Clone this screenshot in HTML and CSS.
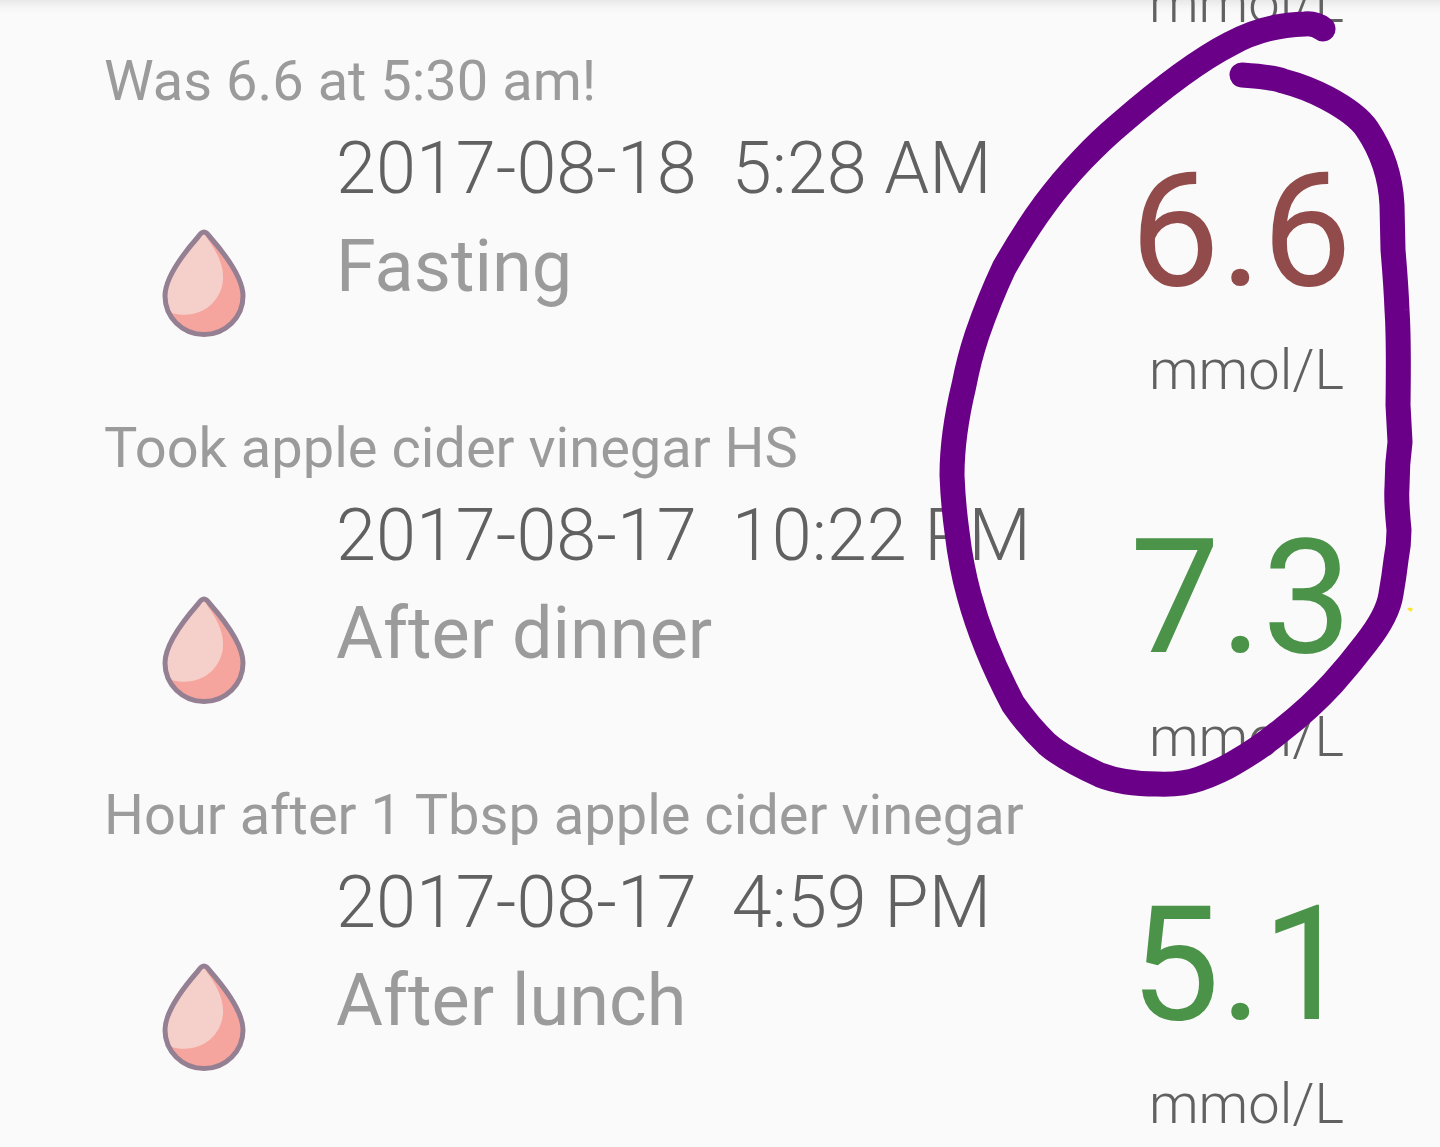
FILE: index.html
```html
<!DOCTYPE html>
<html lang="en">
<head>
  <meta charset="UTF-8" />
  <meta name="viewport" content="width=device-width, initial-scale=1" />
  <title>Glucose Log</title>
  <link rel="stylesheet" href="styles.css">
</head>
<body>
  <!-- shared drop icon -->
  <svg class="symbols" aria-hidden="true">
    <symbol id="drop" viewBox="0 0 84 108">
      <path fill="#f5a59d" d="M42 3C44 3 46 5 48 8C62 24 81 49 81 67A39 38.500 0 0 1 3 67C3 49 22 24 36 8C38 5 40 3 42 3Z"/>
      <path fill="#f5d0cb" d="M42 5C50 16 62 32 61 50C60 72 39 92 9 84C5 77 3 72 3 67C3 49 22 24 36 8Z"/>
      <path fill="none" stroke="#957f92" stroke-width="5" d="M42 3C44 3 46 5 48 8C62 24 81 49 81 67A39 38.500 0 0 1 3 67C3 49 22 24 36 8C38 5 40 3 42 3Z"/>
    </symbol>
  </svg>

  <main class="log">
    <div class="previous">
      <p class="unit">mmol/L</p>
    </div>

    <article class="entry">
      <p class="note">Was 6.6 at 5:30 am!</p>
      <div class="row">
        <svg class="drop" aria-hidden="true"><use href="#drop"/></svg>
        <div class="details">
          <p class="date">2017-08-18  5:28 AM</p>
          <p class="category">Fasting</p>
        </div>
        <div class="reading">
          <p class="value high">6.6</p>
          <p class="unit">mmol/L</p>
        </div>
      </div>
    </article>

    <article class="entry">
      <p class="note">Took apple cider vinegar HS</p>
      <div class="row">
        <svg class="drop" aria-hidden="true"><use href="#drop"/></svg>
        <div class="details">
          <p class="date">2017-08-17  10:22 PM</p>
          <p class="category">After dinner</p>
        </div>
        <div class="reading">
          <p class="value">7.3</p>
          <p class="unit">mmol/L</p>
        </div>
      </div>
    </article>

    <article class="entry">
      <p class="note">Hour after 1 Tbsp apple cider vinegar</p>
      <div class="row">
        <svg class="drop" aria-hidden="true"><use href="#drop"/></svg>
        <div class="details">
          <p class="date">2017-08-17  4:59 PM</p>
          <p class="category">After lunch</p>
        </div>
        <div class="reading">
          <p class="value">5.1</p>
          <p class="unit">mmol/L</p>
        </div>
      </div>
    </article>

    <!-- hand-drawn circle over the readings -->
    <svg class="marker" viewBox="0 0 1440 1147" aria-hidden="true">
      <path class="ink" d="M1323 29Q1315 23 1305 24Q1264 25 1230 44Q1187 66 1120 124Q1101 140 1082 160Q1062 181 1045 204Q1025 231 1004 268Q989 300 977 335Q969 359 964 385Q952 435 952 475Q953 503 957 532Q961 566 969 595Q983 647 1013 704Q1029 727 1047 744Q1063 758 1100 775Q1123 784 1157 784Q1182 785 1199 779Q1221 771 1234 763Q1259 749 1283 729Q1310 708 1333 683Q1350 664 1366 643Q1388 615 1391 594Q1394 577 1396 560Q1399 545 1399 530Q1396 500 1397 487Q1397 464 1400 442Q1399 422 1398 405Q1399 340 1397 310Q1396 285 1393 250L1392 205Q1390 163 1367 129Q1357 114 1327 98Q1306 87 1283 81Q1272 77 1242 75"/>
      <path fill="#fbe62e" d="M1407 609Q1410 606 1413 609L1411 612Z"/>
    </svg>
  </main>
</body>
</html>
```

FILE: styles.css
```css
* {
  box-sizing: border-box;
}

body {
  margin: 0;
  background: #fafafa;
  font-family: Roboto, "Open Sans", sans-serif;
  color: #616161;
}

p {
  margin: 0;
}

.symbols {
  display: none;
}

.log {
  position: relative;
  height: 100vh;
  overflow: hidden;
  background: linear-gradient(#e8e8e8, #f6f6f6 8px, #fafafa 14px);
}

/* tail of the entry scrolled under the header */
.previous {
  display: flex;
  justify-content: flex-end;
  align-items: flex-end;
  height: 48px;
  padding: 0 88px 12px 0;
  overflow: hidden;
}

.entry {
  padding: 0 88px 12px 104px;
}

.note {
  font-size: 56px;
  line-height: 66px;
  color: #9b9b9b;
}

.row {
  display: flex;
  align-items: flex-start;
  margin-top: 6px;
}

.drop {
  flex: none;
  width: 84px;
  height: 108px;
  margin: 109px 90px 0 58px;
}

.details {
  flex: 1;
  font-size: 72px;
  line-height: 98px;
}

.date {
  font-weight: 300;
  white-space: pre;
}

.category {
  color: #9b9b9b;
}

.reading {
  display: flex;
  flex-direction: column;
  align-items: flex-end;
  gap: 12px;
  padding-top: 17px;
}

.value {
  font-size: 160px;
  line-height: 188px;
  color: #4a9349;
}

.value.high {
  color: #914b4b;
}

.unit {
  padding-right: 8px;
  font-size: 56px;
  font-weight: 300;
  line-height: 66px;
}

.marker {
  position: absolute;
  top: 0;
  left: 0;
  width: 100%;
  pointer-events: none;
}

.ink {
  fill: none;
  stroke: #6b0088;
  stroke-width: 25;
  stroke-linecap: round;
  stroke-linejoin: round;
}
```
